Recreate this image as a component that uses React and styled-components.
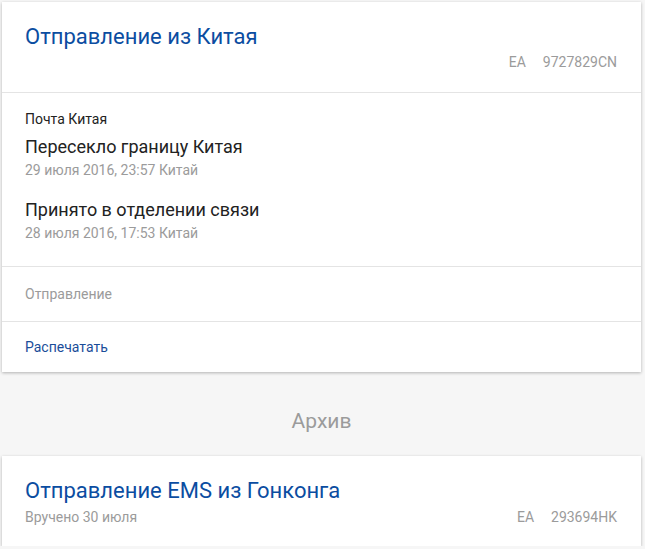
import React from 'react';
import styled, { createGlobalStyle } from 'styled-components';

const GlobalStyle = createGlobalStyle`
  body {
    margin: 0;
    background: #f6f6f6;
    font-family: Roboto, "Liberation Sans", sans-serif;
  }
`;

const Page = styled.div`
  padding: 2px 4px 0 2px;
`;

const Card = styled.div`
  background: #fff;
  box-shadow: 0 1px 3px rgba(0, 0, 0, 0.28);
`;

const Section = styled.div`
  padding: ${props => props.pad || '0 24px 0 23px'};
  border-top: ${props => (props.first ? 'none' : '1px solid #e4e4e4')};
`;

const Title = styled.h2`
  margin: 0;
  font-size: 22px;
  line-height: 28px;
  font-weight: 400;
  color: #0b4da1;
`;

const MetaRow = styled.div`
  display: flex;
  align-items: center;
  margin-top: ${props => props.top || 3}px;
  font-size: 14px;
  line-height: 16px;
  color: #9b9b9b;
`;

const Spacer = styled.div`
  flex: 1;
`;

const Track = styled.span`
  display: flex;
  gap: 17px;
`;

const Operator = styled.div`
  font-size: 14px;
  line-height: 16px;
  color: #222;
`;

const Event = styled.div`
  margin-top: ${props => props.top}px;
`;

const EventTitle = styled.div`
  font-size: 18px;
  line-height: 24px;
  color: #222;
`;

const EventDate = styled.div`
  margin-top: 3px;
  font-size: 14px;
  line-height: 16px;
  color: #9b9b9b;
`;

const Row = styled.div`
  display: flex;
  align-items: center;
  height: ${props => props.h}px;
  font-size: 14px;
  color: ${props => (props.link ? '#1a4d99' : '#9b9b9b')};
`;

const Heading = styled.div`
  margin: 37px 0 23px;
  text-align: center;
  font-size: 21px;
  line-height: 24px;
  color: #9b9b9b;
`;

const events = [
  { title: 'Пересекло границу Китая', date: '29 июля 2016, 23:57 Китай', top: 8 },
  { title: 'Принято в отделении связи', date: '28 июля 2016, 17:53 Китай', top: 20 },
];

export default function App() {
  return (
    <Page>
      <GlobalStyle />
      <Card>
        <Section first pad="21px 24px 22px 23px">
          <Title>Отправление из Китая</Title>
          <MetaRow>
            <Spacer />
            <Track>
              <span>EA</span>
              <span>9727829CN</span>
            </Track>
          </MetaRow>
        </Section>
        <Section pad="18px 24px 25px 23px">
          <Operator>Почта Китая</Operator>
          {events.map(e => (
            <Event key={e.title} top={e.top}>
              <EventTitle>{e.title}</EventTitle>
              <EventDate>{e.date}</EventDate>
            </Event>
          ))}
        </Section>
        <Section>
          <Row h={54}>Отправление</Row>
        </Section>
        <Section>
          <Row h={50} link>Распечатать</Row>
        </Section>
      </Card>
      <Heading>Архив</Heading>
      <Card>
        <Section first pad="21px 24px 21px 23px">
          <Title>Отправление EMS из Гонконга</Title>
          <MetaRow top={4}>
            <span>Вручено 30 июля</span>
            <Spacer />
            <Track>
              <span>EA</span>
              <span>293694HK</span>
            </Track>
          </MetaRow>
        </Section>
      </Card>
    </Page>
  );
}
